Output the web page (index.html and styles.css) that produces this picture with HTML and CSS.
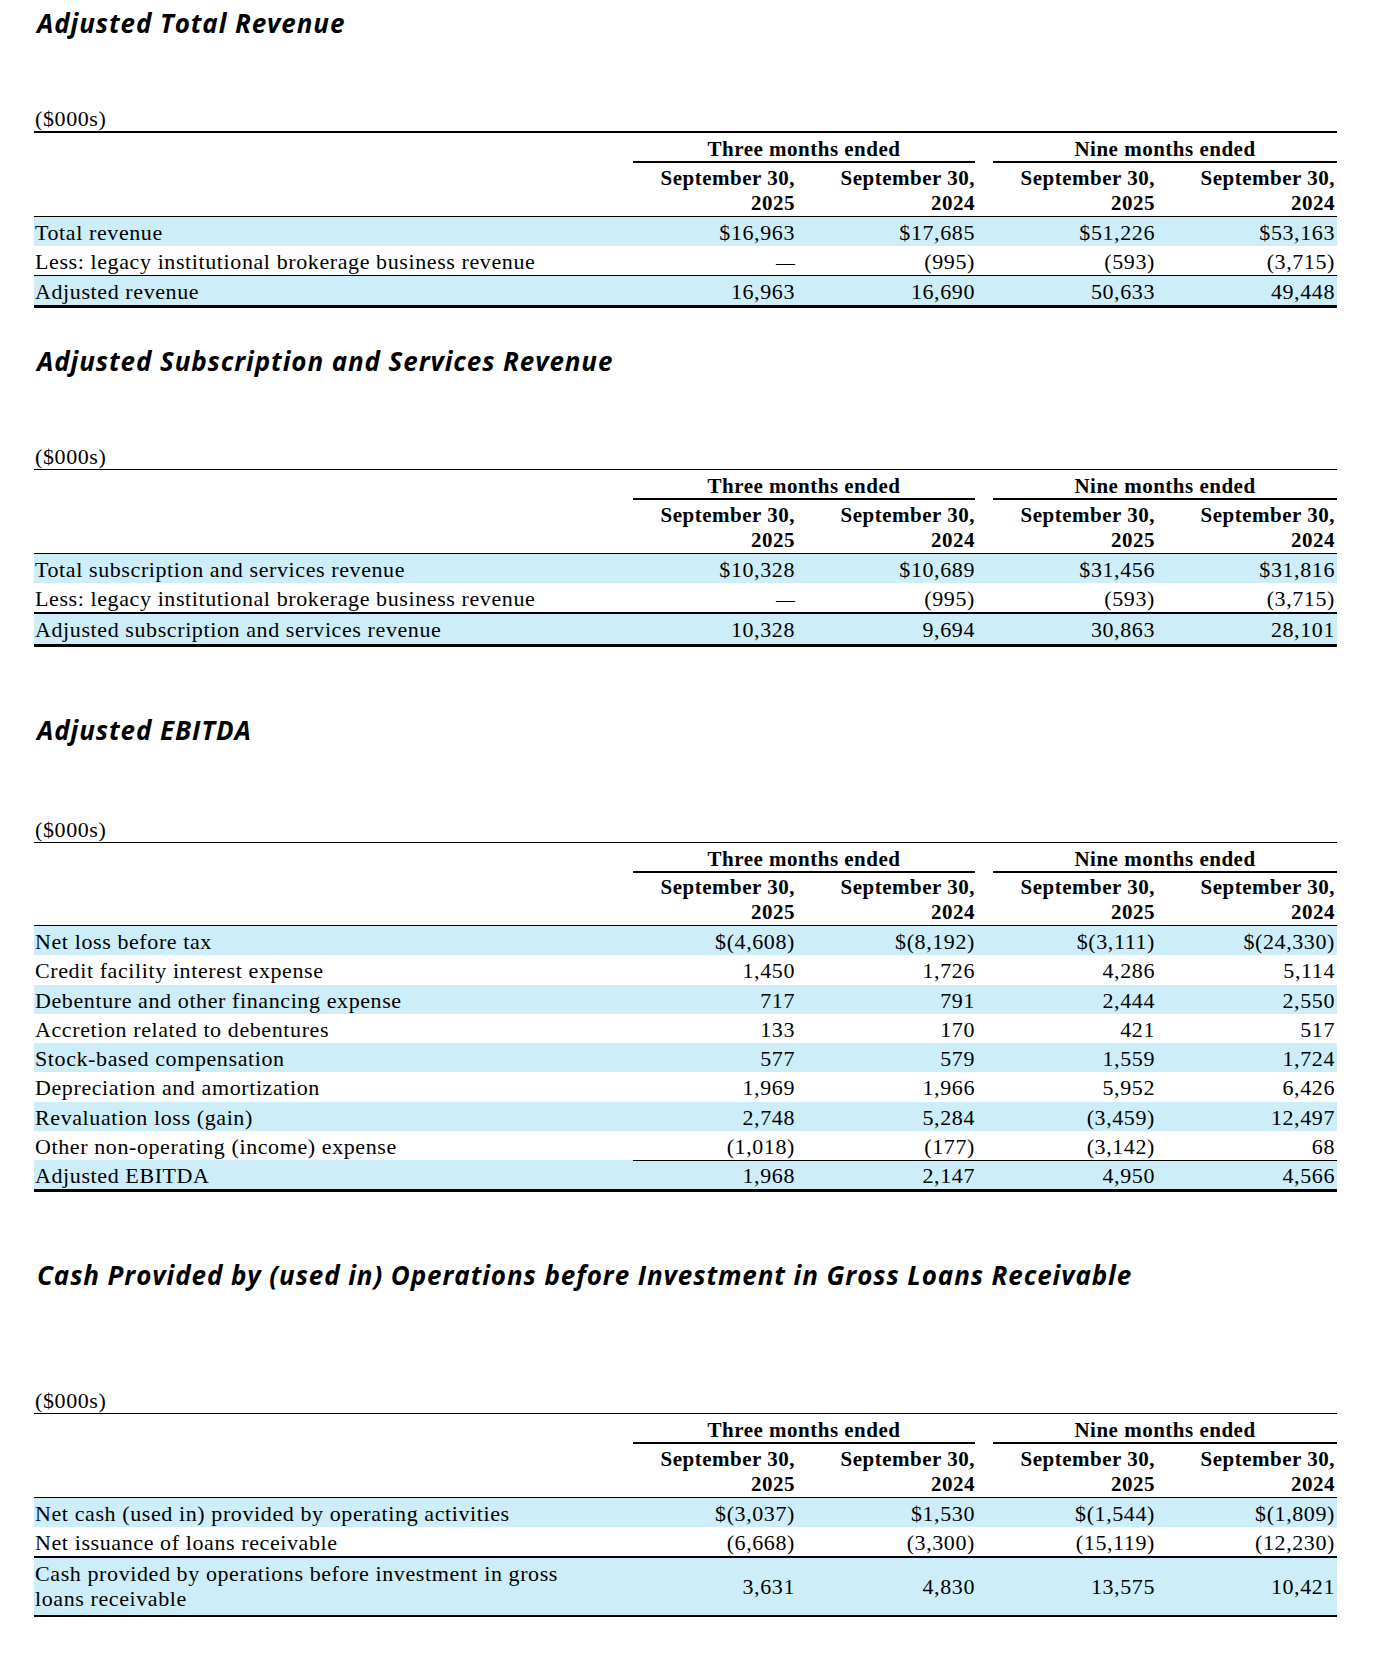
FILE: index.html
```html
<!DOCTYPE html>
<html>
<head>
<meta charset="utf-8">
<link rel="stylesheet" href="styles.css">
</head>
<body>
<div class="page">

<section class="sec s1">
  <h2 class="title">Adjusted Total Revenue</h2>
  <div class="unit thick">($000s)</div>
  <div class="grp"><div class="lab"></div><div class="g g1">Three months ended</div><div class="gsp"></div><div class="g g2">Nine months ended</div></div>
  <div class="dh"><div class="lab"></div><div class="nums"><div class="c c1">September 30,<br>2025</div><div class="c c2">September 30,<br>2024</div><div class="sp"></div><div class="c c3">September 30,<br>2025</div><div class="c c4">September 30,<br>2024</div></div></div>
  <div class="r bg"><div class="lab">Total revenue</div><div class="nums"><div class="c c1">$16,963</div><div class="c c2">$17,685</div><div class="sp"></div><div class="c c3">$51,226</div><div class="c c4">$53,163</div></div></div>
  <div class="r b1"><div class="lab">Less: legacy institutional brokerage business revenue</div><div class="nums"><div class="c c1"><span class="dash">—</span></div><div class="c c2">(995)</div><div class="sp"></div><div class="c c3">(593)</div><div class="c c4">(3,715)</div></div></div>
  <div class="r bg b3"><div class="lab">Adjusted revenue</div><div class="nums"><div class="c c1">16,963</div><div class="c c2">16,690</div><div class="sp"></div><div class="c c3">50,633</div><div class="c c4">49,448</div></div></div>
</section>

<section class="sec s2">
  <h2 class="title">Adjusted Subscription and Services Revenue</h2>
  <div class="unit">($000s)</div>
  <div class="grp"><div class="lab"></div><div class="g g1">Three months ended</div><div class="gsp"></div><div class="g g2">Nine months ended</div></div>
  <div class="dh"><div class="lab"></div><div class="nums"><div class="c c1">September 30,<br>2025</div><div class="c c2">September 30,<br>2024</div><div class="sp"></div><div class="c c3">September 30,<br>2025</div><div class="c c4">September 30,<br>2024</div></div></div>
  <div class="r bg"><div class="lab">Total subscription and services revenue</div><div class="nums"><div class="c c1">$10,328</div><div class="c c2">$10,689</div><div class="sp"></div><div class="c c3">$31,456</div><div class="c c4">$31,816</div></div></div>
  <div class="r b2"><div class="lab">Less: legacy institutional brokerage business revenue</div><div class="nums"><div class="c c1"><span class="dash">—</span></div><div class="c c2">(995)</div><div class="sp"></div><div class="c c3">(593)</div><div class="c c4">(3,715)</div></div></div>
  <div class="r bg b3"><div class="lab">Adjusted subscription and services revenue</div><div class="nums"><div class="c c1">10,328</div><div class="c c2">9,694</div><div class="sp"></div><div class="c c3">30,863</div><div class="c c4">28,101</div></div></div>
</section>

<section class="sec s3">
  <h2 class="title">Adjusted EBITDA</h2>
  <div class="unit">($000s)</div>
  <div class="grp"><div class="lab"></div><div class="g g1">Three months ended</div><div class="gsp"></div><div class="g g2">Nine months ended</div></div>
  <div class="dh"><div class="lab"></div><div class="nums"><div class="c c1">September 30,<br>2025</div><div class="c c2">September 30,<br>2024</div><div class="sp"></div><div class="c c3">September 30,<br>2025</div><div class="c c4">September 30,<br>2024</div></div></div>
  <div class="r bg"><div class="lab">Net loss before tax</div><div class="nums"><div class="c c1">$(4,608)</div><div class="c c2">$(8,192)</div><div class="sp"></div><div class="c c3">$(3,111)</div><div class="c c4">$(24,330)</div></div></div>
  <div class="r"><div class="lab">Credit facility interest expense</div><div class="nums"><div class="c c1">1,450</div><div class="c c2">1,726</div><div class="sp"></div><div class="c c3">4,286</div><div class="c c4">5,114</div></div></div>
  <div class="r bg"><div class="lab">Debenture and other financing expense</div><div class="nums"><div class="c c1">717</div><div class="c c2">791</div><div class="sp"></div><div class="c c3">2,444</div><div class="c c4">2,550</div></div></div>
  <div class="r"><div class="lab">Accretion related to debentures</div><div class="nums"><div class="c c1">133</div><div class="c c2">170</div><div class="sp"></div><div class="c c3">421</div><div class="c c4">517</div></div></div>
  <div class="r bg"><div class="lab">Stock-based compensation</div><div class="nums"><div class="c c1">577</div><div class="c c2">579</div><div class="sp"></div><div class="c c3">1,559</div><div class="c c4">1,724</div></div></div>
  <div class="r"><div class="lab">Depreciation and amortization</div><div class="nums"><div class="c c1">1,969</div><div class="c c2">1,966</div><div class="sp"></div><div class="c c3">5,952</div><div class="c c4">6,426</div></div></div>
  <div class="r bg"><div class="lab">Revaluation loss (gain)</div><div class="nums"><div class="c c1">2,748</div><div class="c c2">5,284</div><div class="sp"></div><div class="c c3">(3,459)</div><div class="c c4">12,497</div></div></div>
  <div class="r"><div class="lab">Other non-operating (income) expense</div><div class="nums"><div class="c c1">(1,018)</div><div class="c c2">(177)</div><div class="sp"></div><div class="c c3">(3,142)</div><div class="c c4">68</div></div></div>
  <div class="r bg sub b3"><div class="lab">Adjusted EBITDA</div><div class="nums"><div class="c c1">1,968</div><div class="c c2">2,147</div><div class="sp"></div><div class="c c3">4,950</div><div class="c c4">4,566</div></div></div>
</section>

<section class="sec s4">
  <h2 class="title">Cash Provided by (used in) Operations before Investment in Gross Loans Receivable</h2>
  <div class="unit">($000s)</div>
  <div class="grp"><div class="lab"></div><div class="g g1">Three months ended</div><div class="gsp"></div><div class="g g2">Nine months ended</div></div>
  <div class="dh"><div class="lab"></div><div class="nums"><div class="c c1">September 30,<br>2025</div><div class="c c2">September 30,<br>2024</div><div class="sp"></div><div class="c c3">September 30,<br>2025</div><div class="c c4">September 30,<br>2024</div></div></div>
  <div class="r bg"><div class="lab">Net cash (used in) provided by operating activities</div><div class="nums"><div class="c c1">$(3,037)</div><div class="c c2">$1,530</div><div class="sp"></div><div class="c c3">$(1,544)</div><div class="c c4">$(1,809)</div></div></div>
  <div class="r b2"><div class="lab">Net issuance of loans receivable</div><div class="nums"><div class="c c1">(6,668)</div><div class="c c2">(3,300)</div><div class="sp"></div><div class="c c3">(15,119)</div><div class="c c4">(12,230)</div></div></div>
  <div class="r bg tall b2"><div class="lab">Cash provided by operations before investment in gross<br>loans receivable</div><div class="nums"><div class="c c1">3,631</div><div class="c c2">4,830</div><div class="sp"></div><div class="c c3">13,575</div><div class="c c4">10,421</div></div></div>
</section>

</div>
</body>
</html>
```

FILE: styles.css
```css
body {
  margin: 0;
  background: #ffffff;
  color: #000000;
  font-family: "Liberation Serif", "Times New Roman", serif;
}

.page {
  width: 1303px;
  padding: 6px 0 0 34px;
}

.sec { display: block; }

.title {
  margin: 0;
  height: 34px;
  padding-left: 3px;
  font-family: "Open Sans", "Noto Sans", sans-serif;
  font-weight: 700;
  font-style: italic;
  font-size: 26px;
  letter-spacing: 0.9px;
  line-height: 34px;
  white-space: nowrap;
}

.s2 { margin-top: 36px; }
.s3 { margin-top: 66px; }
.s4 { margin-top: 66px; }

.unit {
  height: 24px;
  margin-top: 67px;
  padding-left: 1px;
  font-size: 22px;
  letter-spacing: 0.6px;
  line-height: 24px;
  border-bottom: 1px solid #000;
}
.unit.thick { border-bottom-width: 2px; }
.s3 .unit { margin-top: 71px; }
.s4 .unit { margin-top: 97px; }

.grp { display: flex; }
.lab {
  width: 599px;
  flex: none;
  box-sizing: border-box;
  padding-left: 1px;
  white-space: nowrap;
}
.g {
  flex: none;
  padding-top: 4px;
  line-height: 24px;
  height: 24px;
  border-bottom: 2px solid #000;
  text-align: center;
  font-weight: 700;
  font-size: 21px;
  letter-spacing: 0.5px;
  white-space: nowrap;
}
.g1 { width: 342px; }
.gsp { width: 18px; flex: none; }
.g2 { width: 344px; }

.nums {
  display: flex;
  width: 704px;
  flex: none;
  box-sizing: border-box;
}
.c {
  flex: none;
  box-sizing: border-box;
  text-align: right;
  white-space: nowrap;
}
.c1 { width: 162px; }
.c2 { width: 180px; }
.sp { width: 18px; flex: none; }
.c3 { width: 162px; }
.c4 { width: 182px; padding-right: 2px; }

.dh {
  display: flex;
  border-bottom: 1px solid #000;
}
.dh .c {
  padding-top: 2.5px;
  line-height: 25px;
  font-weight: 700;
  font-size: 21px;
  letter-spacing: 0.5px;
}

.r {
  display: flex;
  height: 29.25px;
  font-size: 22px;
  letter-spacing: 0.6px;
}
.r .lab, .r .c {
  padding-top: 4px;
  line-height: 24px;
}
.r.bg { background: #cdedf8; }
.r.b1 { border-bottom: 1px solid #000; }
.r.b2 { border-bottom: 2px solid #000; }
.r.b3 { border-bottom: 3px solid #000; }

.r.sub .nums { border-top: 1px solid #000; }
.r.sub .c { padding-top: 3px; }

.r.tall { height: 56.5px; }
.r.tall .lab {
  padding-top: 3px;
  line-height: 25px;
}
.r.tall .nums { align-items: center; }
.r.tall .c {
  padding-top: 0;
  line-height: 25px;
}

.dash {
  font-size: 19px;
  letter-spacing: 0;
}
```
